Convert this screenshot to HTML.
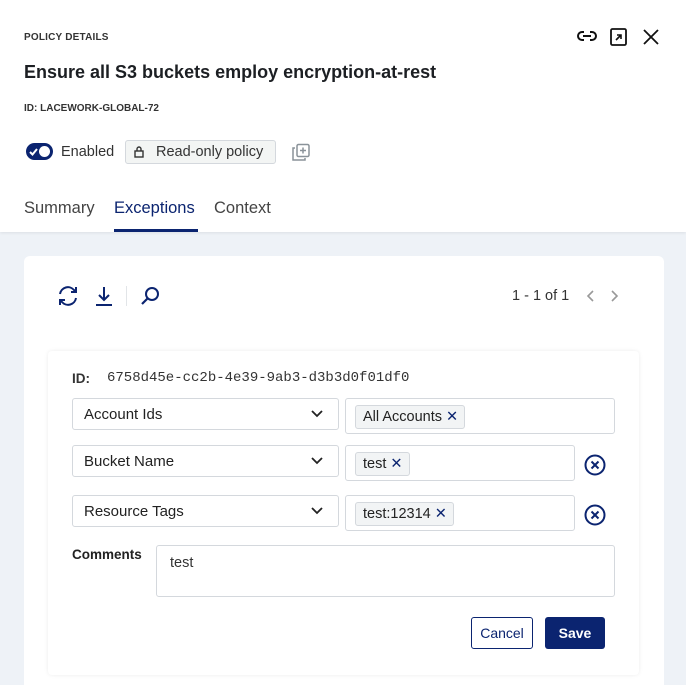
<!DOCTYPE html>
<html style="overflow:hidden"><head><style>
*{box-sizing:border-box;margin:0;padding:0}
html,body{width:686px;height:685px;overflow:hidden}
body{background:#eef2f7;font-family:"Liberation Sans",sans-serif;color:#1f2328;position:relative}
.a{position:absolute}
.hdr{left:0;top:0;width:686px;height:232px;background:#fff;box-shadow:0 1px 3px rgba(0,0,0,.08)}
.navy{color:#0b2470}
.box{border:1px solid #d4d8dd;border-radius:3px;background:#fff}
.chip{border:1px solid #d4d8dd;border-radius:3px;background:#f2f4f5;font-size:14.5px;padding:0 6px 0 7px;height:24px;line-height:22px;position:absolute;color:#222}
.sel{font-size:15px;padding-left:11px;line-height:31px;color:#222}
.chev{position:absolute;right:14px;top:10px}
</style></head><body>
<div class="a hdr"></div>
<div class="a" style="left:24px;top:32px;font-size:10px;font-weight:bold;letter-spacing:.2px;color:#333">POLICY DETAILS</div>
<div class="a" style="left:24px;top:62px;font-size:18px;font-weight:bold;color:#1c1f23">Ensure all S3 buckets employ encryption-at-rest</div>
<div class="a" style="left:24px;top:103px;font-size:10px;font-weight:bold;color:#333">ID: LACEWORK-GLOBAL-72</div>
<svg class="a" style="left:576px;top:28px" width="22" height="16" viewBox="0 0 22 16"><path d="M8 4H6a4 4 0 0 0 0 8h2M14 4h2a4 4 0 0 1 0 8h-2M7 8h8" stroke="#111" stroke-width="2" fill="none"/></svg>
<svg class="a" style="left:609px;top:27px" width="20" height="20" viewBox="0 0 20 20"><rect x="2" y="2" width="15" height="16" rx="1.5" stroke="#111" stroke-width="1.8" fill="none"/><path d="M7 13l5-5M8 8h4v4" stroke="#111" stroke-width="1.6" fill="none"/></svg>
<svg class="a" style="left:642px;top:28px" width="18" height="18" viewBox="0 0 18 18"><path d="M2 2l14 14M16 2L2 16" stroke="#111" stroke-width="1.8"/></svg>
<div class="a" style="left:26px;top:143px;width:27px;height:17px;border-radius:9px;background:#0b2470"></div>
<div class="a" style="left:39px;top:146px;width:11px;height:11px;border-radius:50%;background:#fff"></div>
<svg class="a" style="left:28px;top:146px" width="11" height="11" viewBox="0 0 11 11"><path d="M2 6l2.5 2.5L9 3" stroke="#fff" stroke-width="2" fill="none"/></svg>
<div class="a" style="left:61px;top:144px;font-size:14.5px;color:#333">Enabled</div>
<div class="a" style="left:125px;top:140px;width:151px;height:24px;border:1px solid #d4d8dd;border-radius:3px;background:#f3f5f4"></div>
<svg class="a" style="left:133px;top:145px" width="12" height="14" viewBox="0 0 12 14"><rect x="2" y="6" width="8" height="6" stroke="#333" stroke-width="1.4" fill="none"/><path d="M4 6V4a2 2 0 0 1 4 0v2" stroke="#333" stroke-width="1.4" fill="none"/></svg>
<div class="a" style="left:156px;top:144px;font-size:14.5px;color:#333">Read-only policy</div>
<svg class="a" style="left:291px;top:143px" width="20" height="19" viewBox="0 0 20 19"><rect x="6" y="1.5" width="12" height="12" rx="1.5" stroke="#8a9299" stroke-width="1.5" fill="none"/><path d="M4 5H2v12h12v-2" stroke="#8a9299" stroke-width="1.5" fill="none"/><path d="M12 4.5v6M9 7.5h6" stroke="#8a9299" stroke-width="1.5"/></svg>
<div class="a" style="left:24px;top:199px;font-size:16.5px;color:#444">Summary</div>
<div class="a navy" style="left:114px;top:199px;font-size:16.5px">Exceptions</div>
<div class="a" style="left:114px;top:229px;width:84px;height:3px;background:#0b2470"></div>
<div class="a" style="left:214px;top:199px;font-size:16.5px;color:#444">Context</div>
<div class="a" style="left:24px;top:256px;width:640px;height:440px;background:#fff;border-radius:6px"></div>
<svg class="a" style="left:57px;top:285px" width="22" height="22" viewBox="0 0 22 22"><path d="M3 9a8 8 0 0 1 14-4l2 2M19 13a8 8 0 0 1-14 4l-2-2M19 2v5h-5M3 20v-5h5" stroke="#0b2470" stroke-width="2" fill="none"/></svg>
<svg class="a" style="left:93px;top:285px" width="22" height="22" viewBox="0 0 22 22"><path d="M11 2v13M6 10l5 5 5-5M3 20h16" stroke="#0b2470" stroke-width="2" fill="none"/></svg>
<div class="a" style="left:126px;top:286px;width:1px;height:20px;background:#e2e5e8"></div>
<svg class="a" style="left:139px;top:285px" width="22" height="22" viewBox="0 0 22 22"><circle cx="13" cy="9" r="6" stroke="#0b2470" stroke-width="2" fill="none"/><path d="M9 13l-6 6" stroke="#0b2470" stroke-width="2.2"/></svg>
<div class="a" style="left:512px;top:288px;font-size:14.5px;color:#333">1 - 1 of 1</div>
<svg class="a" style="left:585px;top:289px" width="40" height="14" viewBox="0 0 40 14"><path d="M8 2L3 7l5 5M27 2l5 5-5 5" stroke="#999" stroke-width="1.6" fill="none"/></svg>
<div class="a" style="left:48px;top:351px;width:591px;height:324px;background:#fff;border-radius:4px;box-shadow:0 0 4px rgba(0,0,0,.08)"></div>
<div class="a" style="left:72px;top:371px;font-size:13.5px;font-weight:bold;color:#333">ID:</div>
<div class="a" style="left:107px;top:370px;font-size:14px;font-family:'Liberation Mono',monospace;color:#333">6758d45e-cc2b-4e39-9ab3-d3b3d0f01df0</div>
<div class="a box sel" style="left:72px;top:398px;width:267px;height:32px">Account Ids<svg class="chev" width="14" height="10" viewBox="0 0 14 10"><path d="M2 2l5 5 5-5" stroke="#222" stroke-width="1.8" fill="none"/></svg></div>
<div class="a box" style="left:345px;top:398px;width:270px;height:36px"><div class="chip" style="left:9px;top:6px">All Accounts <span class="navy">✕</span></div></div>
<div class="a box sel" style="left:72px;top:445px;width:267px;height:32px">Bucket Name<svg class="chev" width="14" height="10" viewBox="0 0 14 10"><path d="M2 2l5 5 5-5" stroke="#222" stroke-width="1.8" fill="none"/></svg></div>
<div class="a box" style="left:345px;top:445px;width:230px;height:36px"><div class="chip" style="left:9px;top:6px">test <span class="navy">✕</span></div></div>
<svg class="a" style="left:584px;top:454px" width="22" height="22" viewBox="0 0 22 22"><circle cx="11" cy="11" r="9.5" stroke="#0b2470" stroke-width="2" fill="none"/><path d="M7.5 7.5l7 7M14.5 7.5l-7 7" stroke="#0b2470" stroke-width="2"/></svg>
<div class="a box sel" style="left:72px;top:495px;width:267px;height:32px">Resource Tags<svg class="chev" width="14" height="10" viewBox="0 0 14 10"><path d="M2 2l5 5 5-5" stroke="#222" stroke-width="1.8" fill="none"/></svg></div>
<div class="a box" style="left:345px;top:495px;width:230px;height:36px"><div class="chip" style="left:9px;top:6px">test:12314 <span class="navy">✕</span></div></div>
<svg class="a" style="left:584px;top:504px" width="22" height="22" viewBox="0 0 22 22"><circle cx="11" cy="11" r="9.5" stroke="#0b2470" stroke-width="2" fill="none"/><path d="M7.5 7.5l7 7M14.5 7.5l-7 7" stroke="#0b2470" stroke-width="2"/></svg>
<div class="a" style="left:72px;top:547px;font-size:13.5px;font-weight:bold;color:#222">Comments</div>
<div class="a box" style="left:156px;top:545px;width:459px;height:52px;font-size:14.5px;padding:9px 0 0 13px;color:#333">test</div>
<div class="a" style="left:471px;top:617px;width:62px;height:32px;border:1px solid #0b2470;border-radius:3px;color:#0b2470;font-size:14px;text-align:center;line-height:30px">Cancel</div>
<div class="a" style="left:545px;top:617px;width:60px;height:32px;background:#0b2470;border-radius:3px;color:#fff;font-size:14px;font-weight:bold;text-align:center;line-height:32px">Save</div>
</body></html>
